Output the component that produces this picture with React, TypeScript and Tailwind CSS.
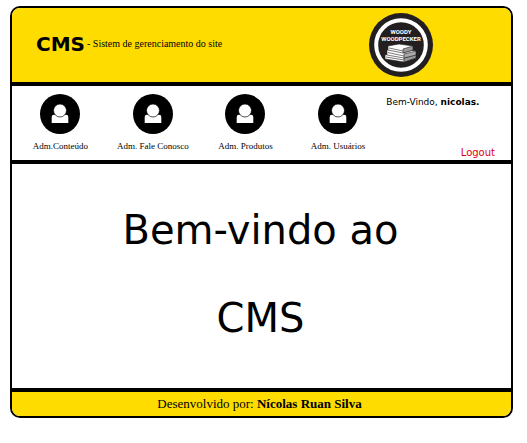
const sans = "font-['Verdana','DejaVu_Sans',sans-serif]";
const serif = "font-['Liberation_Serif','Times_New_Roman',serif]";

const sections = ["Adm.Conteúdo", "Adm. Fale Conosco", "Adm. Produtos", "Adm. Usuários"];

function UserIcon() {
  return (
    <svg viewBox="0 0 40 40" className="size-10" aria-hidden="true">
      <circle cx="20" cy="20" r="20" fill="#000" />
      <path d="M11.700 29v-6q0-2.200 2.200-2.200h12.200q2.200 0 2.200 2.200v6z" fill="#fff" />
      <circle cx="20" cy="16.500" r="6.500" fill="#fff" stroke="#000" strokeWidth="0.7" />
    </svg>
  );
}

function Logo() {
  return (
    <svg viewBox="0 0 64 64" className="size-16 shrink-0" role="img" aria-label="Woody Woodpecker">
      <circle cx="32" cy="32" r="32" fill="#231f20" />
      <circle cx="32" cy="32" r="24.800" fill="#231f20" stroke="#fff" strokeWidth="4" />
      <g fill="#fff" fontFamily="'Roboto','Liberation Sans',sans-serif" fontWeight="700" textAnchor="middle">
        <text x="32" y="21" fontSize="6">WOODY</text>
        <text x="32" y="28" fontSize="6">WOODPECKER</text>
      </g>
      <g stroke="#231f20" strokeWidth="0.6" strokeLinejoin="round">
        <path d="M16 42l12-3 19 4v2l-12 4-19-3z" fill="#fff" />
        <path d="M35 45l12-4v4l-12 4z" fill="#999" />
        <path d="M18 37l12-2 17 3v4l-12 3-17-3z" fill="#fff" />
        <path d="M35 41l12-3v4l-12 3z" fill="#aaa" />
        <path d="M19 33l11-2 14 2v4l-10 3-15-3z" fill="#fff" />
        <path d="M34 36l10-3v4l-10 3z" fill="#999" />
        <path d="M20 35l14 3M19 39.500l16 3.500M17 44l18 3" fill="none" />
      </g>
    </svg>
  );
}

export default function App() {
  return (
    <div className="bg-white pt-[6px] pr-[14px] pb-6 pl-[10px] text-black">
      <div className="overflow-hidden rounded-[10px] border-2 border-black">
        <header className="flex h-[78px] items-center border-b-4 border-black bg-[#ffdc00] pr-[78px] pl-6">
          <div className="flex flex-1 items-center gap-[2px] pb-[2px]">
            <h1 className={`${sans} text-[20px] leading-6 font-bold`}>CMS</h1>
            <p className={`${serif} text-[10px] leading-4`}>- Sistem de gerenciamento do site</p>
          </div>
          <Logo />
        </header>

        <div className="flex h-[78px] border-b-4 border-black">
          <nav className="grid w-3/4 grid-cols-4 px-[2px] pt-2">
            {sections.map((label) => (
              <a key={label} href="#" className={`${serif} flex flex-col items-center gap-1 text-[9px] leading-4 whitespace-nowrap`}>
                <UserIcon />
                {label}
              </a>
            ))}
          </nav>
          <div className={`${sans} flex flex-1 flex-col justify-between pt-2 pr-4`}>
            <p className="text-[9px] leading-4 whitespace-nowrap">
              Bem-Vindo, <b>nicolas.</b>
            </p>
            <a href="#" className="self-end text-[10px] leading-[14px] text-[#e00010]">Logout</a>
          </div>
        </div>

        <main className={`${sans} border-b-4 border-black pt-[22px] pr-[2px] pb-[26px] text-center text-[40px] leading-[88px]`}>
          <p>Bem-vindo ao</p>
          <p>CMS</p>
        </main>

        <footer className={`${serif} bg-[#ffdc00] pr-1 text-center text-[13px] leading-6`}>
          Desenvolvido por: <b>Nícolas Ruan Silva</b>
        </footer>
      </div>
    </div>
  );
}
